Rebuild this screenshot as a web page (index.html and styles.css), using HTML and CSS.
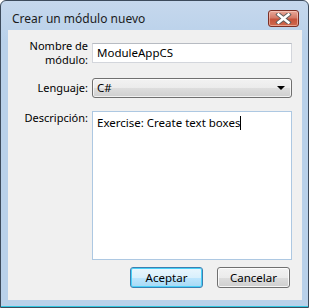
FILE: index.html
```html
<!DOCTYPE html>
<html>
    <head>
	<meta charset="UTF-8">
	<meta name="viewport" content="width=device-width, initial-scale=1.0">
	<title>Crear un módulo nuevo</title>
	<link rel="stylesheet" href="styles.css">
    </head>
    <body>
	<div class = "window">
		<div class = "titlebar">
			<span class = "title">Crear un módulo nuevo</span>
			<button class = "close" type = "button">
				<svg width="17" height="11" viewBox="0 0 17 11">
					<path d="M3.5 1.5 L13.5 9.5 M13.5 1.5 L3.5 9.5" stroke="#5b5b5b" stroke-width="4.4" stroke-linecap="square"/>
					<path d="M3.5 1.5 L13.5 9.5 M13.5 1.5 L3.5 9.5" stroke="#ffffff" stroke-width="2.6" stroke-linecap="square"/>
				</svg>
			</button>
		</div>

		<div class = "client">
			<div class = "form">
				<label class = "lbl" for = "nombre">Nombre de<br>módulo:</label>
				<div id = "nombre" class = "field">ModuleAppCS</div>

				<label class = "lbl" for = "lenguaje">Lenguaje:</label>
				<div id = "lenguaje" class = "combo"><span>C#</span><span class = "arrow"></span></div>

				<label class = "lbl lbl_top" for = "descripcion">Descripción:</label>
				<div id = "descripcion" class = "field memo">Exercise: Create text boxes<span class = "caret"></span></div>
			</div>

			<div class = "buttons">
				<button class = "btn btn_default" type = "button">Aceptar</button>
				<button class = "btn" type = "button">Cancelar</button>
			</div>
		</div>
	</div>
    </body>
</html>
```

FILE: styles.css
```css
	    body {
		background-color: white;
		margin: 0px;
		padding: 0px;
		font-family: "Noto Sans", "DejaVu Sans", sans-serif;
		font-size: 11px;
		color: #000000;
	    }

		.window{
			width: 309px;
			height: 308px;
			box-sizing: border-box;
			border: 1px solid #3d4b5c;
			border-radius: 6px 6px 0 0;
			background: linear-gradient(#c6d8ed, #b9d1ea 40px);
			box-shadow: inset 0 -1px #31c6e0;
			padding-bottom: 7px;
			display: flex;
			flex-direction: column;
		}

		.titlebar{
			height: 29px;
			display: flex;
			align-items: flex-start;
			justify-content: space-between;
		}

		.title{
			margin-left: 11px;
			margin-top: 10px;
			font-size: 12px;
			line-height: 16px;
			color: #1b1b1b;
		}

		.close{
			width: 31px;
			height: 17px;
			margin-top: 9px;
			margin-right: 9px;
			padding: 0;
			border: 1px solid #7b2f25;
			border-radius: 3px;
			background: linear-gradient(#e9a99a, #d47b68 45%, #c5533c 55%, #d06a4f);
			box-shadow: inset 0 0 0 1px rgba(255,220,210,0.5);
			display: flex;
			align-items: center;
			justify-content: center;
		}

		.client{
			flex: 1;
			margin: 0 6px 0 7px;
			background-color: #f0f0f0;
			display: flex;
			flex-direction: column;
		}

		.form{
			display: grid;
			grid-template-columns: 80px 200px;
			grid-template-rows: 28px 20px 151px;
			column-gap: 4px;
			row-gap: 11px;
			padding-top: 9px;
			align-items: center;
		}

		.lbl{
			text-align: right;
			line-height: 14px;
		}

		.lbl_top{
			align-self: start;
			margin-top: 2px;
		}

		.field{
			height: 20px;
			box-sizing: border-box;
			background-color: white;
			border: 1px solid #d3d6dc;
			border-top-color: #b7bbc2;
			padding: 1px 4px;
			font-size: 11.5px;
			line-height: 16px;
		}

		.memo{
			height: 149px;
			margin-top: 2px;
			align-self: start;
			border-color: #adc8e2;
			padding-top: 3px;
		}

		.caret{
			display: inline-block;
			width: 1px;
			height: 14px;
			background-color: black;
			vertical-align: -3px;
		}

		.combo{
			height: 20px;
			box-sizing: border-box;
			border: 1px solid #707070;
			border-radius: 3px;
			background: linear-gradient(#f2f2f2 0%, #ebebeb 50%, #dddddd 51%, #cfcfcf 100%);
			box-shadow: inset 0 0 0 1px rgba(255,255,255,0.7);
			padding: 0 6px 0 4px;
			display: flex;
			align-items: center;
			justify-content: space-between;
			font-size: 11.5px;
			line-height: 16px;
		}

		.arrow{
			width: 0;
			height: 0;
			border-left: 4px solid transparent;
			border-right: 4px solid transparent;
			border-top: 4px solid #000000;
		}

		.buttons{
			display: flex;
			justify-content: flex-end;
			gap: 14px;
			margin-top: 7px;
			padding-right: 12px;
		}

		.btn{
			width: 73px;
			height: 21px;
			padding: 0;
			font-family: inherit;
			font-size: 11.5px;
			color: black;
			border: 1px solid #707070;
			border-radius: 3px;
			background: linear-gradient(#f2f2f2 0%, #ebebeb 50%, #dddddd 51%, #cfcfcf 100%);
			box-shadow: inset 0 0 0 1px rgba(255,255,255,0.8);
		}

		.btn_default{
			border-color: #3c7fb1;
			background: linear-gradient(#eaf6fd 0%, #d9f0fc 50%, #bee6fd 51%, #a7d9f5 100%);
			box-shadow: inset 0 0 0 1px #48d1f8;
		}
```
